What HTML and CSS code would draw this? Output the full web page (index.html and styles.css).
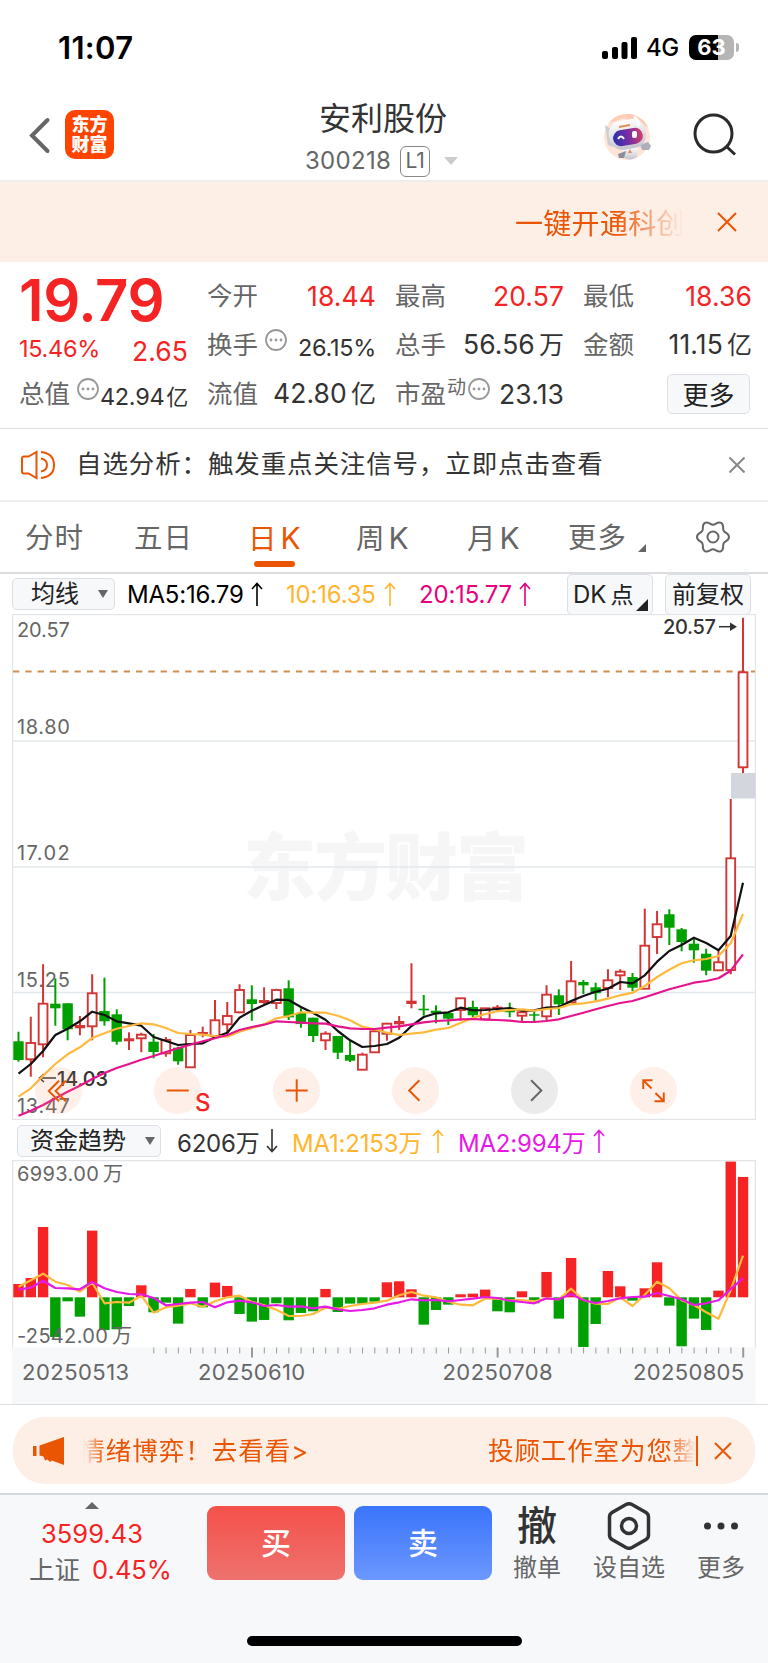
FILE: index.html
```html
<!DOCTYPE html>
<html lang="zh-CN">
<head>
    <meta charset="UTF-8">
    <meta name="viewport" content="width=device-width, initial-scale=1.0">
    <title>安利股份 300218</title>
    <link rel="stylesheet" href="styles.css">
</head>
<body>
    <div class="status-bar">
        <span class="clock">11:07</span>
        <svg class="signal" width="36" height="22" viewBox="0 0 36 22">
            <rect x="0" y="14" width="6" height="8" rx="2"/>
            <rect x="10" y="10" width="6" height="12" rx="2"/>
            <rect x="19.500" y="5" width="6" height="17" rx="2"/>
            <rect x="29" y="0" width="6" height="22" rx="2"/>
        </svg>
        <span class="network">4G</span>
        <span class="battery">63</span>
        <span class="battery-cap"></span>
    </div>

    <header class="title-bar">
        <svg class="back" width="22" height="38" viewBox="0 0 22 38"><path d="M18.500 3 L3 18.500 L18.500 34"/></svg>
        <div class="logo"><span>东方</span><span>财富</span></div>
        <div class="stock">
            <div class="stock-name">安利股份</div>
            <div class="stock-code">300218<span class="level">L1</span><i class="caret"></i></div>
        </div>
        <svg class="robot" width="48" height="48" viewBox="0 0 48 48">
            <defs>
                <linearGradient id="visor" x1="0" x2="1"><stop offset="0" stop-color="#2a2fb0"/><stop offset=".55" stop-color="#7a2fa0"/><stop offset="1" stop-color="#d8406a"/></linearGradient>
                <linearGradient id="shell" x1="0" x2="0" y1="0" y2="1"><stop offset="0" stop-color="#fff"/><stop offset="1" stop-color="#c4c4cc"/></linearGradient>
            </defs>
            <circle cx="23" cy="24" r="23" fill="#ffe4d8"/>
            <path d="M5 10 A23 23 0 0 1 44 14 L36 12 L20 5 Z" fill="#ffcdb6"/>
            <path d="M1 12 L8 17 L9 34 L4 32 Z" fill="#cdcdd4"/>
            <path d="M18 34 H34 L33 44 Q26 49 19 44 Z" fill="url(#shell)"/>
            <path d="M26 36 l2 4 h-4 z" fill="#e48a5c"/>
            <path d="M36 32 L44 29 L47 33 L45 37 L38 37 Z" fill="#aeaeb8"/>
            <path d="M14 41 L22 38 L20 45 L15 45 Z" fill="#8d8d98"/>
            <rect x="5" y="7" width="37" height="29" rx="13" fill="url(#shell)" transform="rotate(-10 23 22)"/>
            <rect x="9" y="16" width="30" height="16" rx="8" fill="url(#visor)" transform="rotate(-10 24 24)"/>
            <path d="M14 26 q3 -5 6 0" fill="none" stroke="#fff" stroke-width="2"/>
            <rect x="28" y="18" width="5" height="7" rx="2" fill="#fff"/>
            <path d="M15 13 L26 11 L26 13 L15 15 Z" fill="#e0914f"/>
            <path d="M30 4 Q36 8 34 13" fill="none" stroke="#fff" stroke-width="3"/>
        </svg>
        <svg class="search" width="46" height="46" viewBox="0 0 46 46"><circle cx="20.500" cy="20.500" r="18.500"/><path d="M33 33 L42 41.500"/></svg>
    </header>

    <div class="banner">
        <span class="banner-text">一键开通科创</span>
        <svg class="banner-close" width="20" height="20" viewBox="0 0 20 20"><path d="M1 1 L19 19 M19 1 L1 19"/></svg>
    </div>

    <section class="quote">
        <div class="price">19.79</div>
        <div class="cell"><label>今开</label><b class="red">18.44</b></div>
        <div class="cell"><label>最高</label><b class="red">20.57</b></div>
        <div class="cell"><label>最低</label><b class="red">18.36</b></div>
        <div class="cell change"><b class="red small">15.46%</b><b class="red">2.65</b></div>
        <div class="cell"><label>换手</label><svg class="more-dot"><use href="#dots"/></svg><b class="small low">26.15%</b></div>
        <div class="cell"><label>总手</label><b>56.56<em>万</em></b></div>
        <div class="cell"><label>金额</label><b>11.15<em>亿</em></b></div>
        <div class="cell"><label>总值</label><svg class="more-dot"><use href="#dots"/></svg><b class="small low">42.94<em>亿</em></b></div>
        <div class="cell"><label>流值</label><b>42.80<em>亿</em></b></div>
        <div class="cell pe"><label>市盈<sup>动</sup></label><svg class="more-dot"><use href="#dots"/></svg><b>23.13</b></div>
        <div class="cell"><button class="more-btn">更多</button></div>
    </section>

    <div class="notice">
        <svg width="36" height="30" viewBox="0 0 36 30"><path d="M16.500 2 V28 L8.500 23.500 H4 Q2 23.500 2 21.500 V8.500 Q2 6.500 4 6.500 H8.500 Z M21 8.500 Q27 9.500 27 15 Q27 20.500 21 21.500 M21 2 Q34 3.500 34 15 Q34 26.500 21 28"/></svg>
        <span>自选分析：触发重点关注信号，立即点击查看</span>
        <svg class="notice-close" width="16" height="16" viewBox="0 0 16 16"><path d="M.5 .5 L15.500 15.500 M15.500 .5 L.5 15.500"/></svg>
    </div>

    <nav class="tabs">
        <a>分时</a>
        <a>五日</a>
        <a class="active">日<i>K</i></a>
        <a>周<i>K</i></a>
        <a>月<i>K</i></a>
        <a class="tab-more">更多</a>
        <svg class="gear" width="34" height="34" viewBox="0 0 34 34">
            <path d="M33 17 C33 20.900 29 20.800 27.650 23.150 C26.300 25.500 28.500 29.150 25.150 31.100 C21.800 33.050 19.700 29.300 17 29.300 C14.300 29.300 12.200 33.050 8.850 31.100 C5.500 29.150 7.700 25.500 6.350 23.150 C5 20.800 1 20.900 1 17 C1 13.100 5 13.200 6.350 10.850 C7.700 8.500 5.500 4.850 8.850 2.900 C12.200 .95 14.300 4.700 17 4.700 C19.700 4.700 21.800 .95 25.150 2.900 C28.500 4.850 26.300 8.500 27.650 10.850 C29 13.200 33 13.100 33 17 Z"/>
            <circle cx="17" cy="17" r="5.500"/>
        </svg>
    </nav>

    <div class="ma-bar">
        <div class="picker">均线<i></i></div>
        <span class="ma ma5">MA5:16.79</span><svg class="arrow black"><use href="#up"/></svg>
        <span class="ma ma10">10:16.35</span><svg class="arrow yellow"><use href="#up"/></svg>
        <span class="ma ma20">20:15.77</span><svg class="arrow pink"><use href="#up"/></svg>
        <div class="chip dk">DK<em>点</em></div>
        <div class="chip">前复权</div>
    </div>

    <div class="chart">
        <svg id="kline" width="744" height="506" viewBox="12 614 744 506"></svg>
        <div class="controls">
            <span><svg viewBox="0 0 48 48"><path d="M24.500 14 L14 24.500 L24.500 35 M31.500 14 L21 24.500 L31.500 35"/></svg></span>
            <span><svg viewBox="0 0 48 48"><path d="M13 24 H35.500"/></svg></span>
            <span><svg viewBox="0 0 48 48"><path d="M13 24 H35.500 M24.200 12.500 V35.500"/></svg></span>
            <span><svg viewBox="0 0 48 48"><path d="M28 13.500 L17.500 24 L28 34.500"/></svg></span>
            <span class="grey"><svg viewBox="0 0 48 48"><path d="M20.500 13.500 L31 24 L20.500 34.500"/></svg></span>
            <span><svg viewBox="0 0 48 48"><path d="M13.500 22.500 V13.500 H23 M13.500 13.500 L22 22 M34.500 26 V35 H25 M34.500 35 L26 26.500"/></svg></span>
        </div>
    </div>

    <div class="fund-bar">
        <div class="picker wide">资金趋势<i></i></div>
        <span class="ma f0">6206万</span><svg class="arrow dark"><use href="#down"/></svg>
        <span class="ma f1">MA1:2153万</span><svg class="arrow yellow"><use href="#up"/></svg>
        <span class="ma f2">MA2:994万</span><svg class="arrow purple"><use href="#up"/></svg>
    </div>
    <div class="fund">
        <svg id="fund" width="744" height="244" viewBox="12 1160 744 244"></svg>
    </div>

    <div class="promo-wrap">
        <div class="promo">
            <svg width="32" height="28" viewBox="0 0 32 28"><path d="M0 9 H3.500 V19 H0 Z M6.500 8.500 L31 0 V28 L19 23.500 L17 25 L14.500 22.500 L12 23.500 L10.500 19.500 L6.500 18.500 Z"/></svg>
            <span class="promo-left">情绪博弈！去看看&gt;</span>
            <span class="promo-right">投顾工作室为您整</span>
            <i class="bar"></i>
            <svg class="promo-close" width="18" height="18" viewBox="0 0 18 18"><path d="M1 1 L17 17 M17 1 L1 17"/></svg>
        </div>
    </div>

    <footer class="bottom">
        <div class="index">
            <i></i>
            <div class="index-value">3599.43</div>
            <div class="index-row">上证<b>0.45%</b></div>
        </div>
        <button class="buy">买</button>
        <button class="sell">卖</button>
        <div class="action cancel"><strong>撤</strong><span>撤单</span></div>
        <div class="action fav">
            <svg width="46" height="48" viewBox="0 0 46 48"><path d="M20 2.500 Q23 1 26 2.500 L40 10.500 Q42.500 12 42.500 15 V33 Q42.500 36 40 37.500 L26 45.500 Q23 47 20 45.500 L6 37.500 Q3.500 36 3.500 33 V15 Q3.500 12 6 10.500 Z"/><circle cx="23" cy="24" r="7.500"/></svg>
            <span>设自选</span>
        </div>
        <div class="action other">
            <svg width="36" height="48" viewBox="0 0 36 48"><circle cx="4.500" cy="24" r="3.500"/><circle cx="18" cy="24" r="3.500"/><circle cx="31.500" cy="24" r="3.500"/></svg>
            <span>更多</span>
        </div>
    </footer>
    <div class="home"><i></i></div>

    <svg class="defs" width="0" height="0">
        <symbol id="dots" viewBox="0 0 22 22"><circle cx="11" cy="11" r="10" fill="none" stroke="#999" stroke-width="1.800"/><circle cx="6" cy="11" r="1.400" fill="#999"/><circle cx="11" cy="11" r="1.400" fill="#999"/><circle cx="16" cy="11" r="1.400" fill="#999"/></symbol>
        <symbol id="up" viewBox="0 0 12 24"><path d="M6 24 V1.500 M1 7 L6 1.500 L11 7" fill="none" stroke="currentColor" stroke-width="1.600"/></symbol>
        <symbol id="down" viewBox="0 0 12 24"><path d="M6 0 V22.500 M1 17 L6 22.500 L11 17" fill="none" stroke="currentColor" stroke-width="1.600"/></symbol>
    </svg>

    <script src="chart.js"></script>
</body>
</html>
```
FILE: styles.css
```css
* {
    box-sizing: border-box;
}
body {
    margin: 0;
    width: 768px;
    height: 1663px;
    overflow: hidden;
    background: #fff;
    color: #333;
    font-family: Inter, "Noto Sans CJK SC", sans-serif;
    font-weight: 400;
}
i, em {
    font-style: normal;
}
svg {
    display: block;
    flex: none;
}
.defs {
    display: none;
}
.status-bar {
    display: flex;
    align-items: center;
    height: 95px;
    padding-left: 58px;
    color: #000;
}
.clock {
    width: 544px;
    font-size: 31px;
    font-weight: 600;
    letter-spacing: 0.3px;
}
.network {
    width: 43px;
    margin-left: 8px;
    font-size: 24px;
    font-weight: 500;
    letter-spacing: -0.5px;
    white-space: nowrap;
}
.battery {
    width: 45px;
    height: 25px;
    border-radius: 7px;
    background: linear-gradient(90deg, #000 64%, #b5b5b5 64%);
    color: #fff;
    font-size: 22px;
    font-weight: 700;
    line-height: 25px;
    text-align: center;
}
.battery-cap {
    width: 3px;
    height: 9px;
    margin-left: 2px;
    border-radius: 0 4px 4px 0;
    background: #b5b5b5;
}

/* title */
.title-bar {
    display: flex;
    height: 87px;
    padding-left: 29px;
    border-bottom: 2px solid #eee;
}
.back {
    margin-top: 22px;
    fill: none;
    stroke: #666;
    stroke-width: 4;
    stroke-linecap: round;
}
.logo {
    display: flex;
    flex-direction: column;
    justify-content: center;
    width: 49px;
    height: 49px;
    margin: 15px 0 0 14px;
    border-radius: 10px;
    background: #ff4400;
    color: #fff;
    font-size: 18px;
    font-weight: 900;
    line-height: 20px;
    text-align: center;
}
.stock {
    width: 300px;
    margin-left: 119px;
    text-align: center;
}
.stock-name {
    height: 48px;
    font-size: 32px;
    line-height: 48px;
}
.stock-code {
    display: flex;
    align-items: center;
    padding-left: 72px;
    height: 36px;
    color: #666;
    font-size: 24px;
    letter-spacing: 0.3px;
    line-height: 34px;
}
.level {
    width: 30px;
    height: 31px;
    margin-left: 9px;
    border: 1.5px solid #888;
    border-radius: 6px;
    font-size: 21px;
    letter-spacing: 0;
    line-height: 28px;
}
.caret {
    margin-left: 14px;
    border: 7px solid transparent;
    border-top: 8px solid #ccc;
    border-bottom: 0;
}
.robot {
    margin: 18px 0 0 71px;
}
.search {
    margin: 18px 0 0 41px;
    fill: none;
    stroke: #2a2a2a;
    stroke-width: 3;
}

.banner {
    display: flex;
    align-items: center;
    height: 80px;
    padding-left: 515px;
    background: #fdeee6;
    color: #ea5504;
}
.banner-text {
    width: 172px;
    height: 40px;
    overflow: hidden;
    font-size: 28px;
    line-height: 44px;
    letter-spacing: 0.3px;
    white-space: nowrap;
    -webkit-mask-image: linear-gradient(90deg, #000 58%, transparent 98%);
    mask-image: linear-gradient(90deg, #000 58%, transparent 98%);
}
.banner-close {
    margin-left: 30px;
    fill: none;
    stroke: #ea5504;
    stroke-width: 2;
}

/* quote */
.quote {
    display: grid;
    grid-template-columns: repeat(4, 168px);
    grid-auto-rows: 49px;
    column-gap: 20px;
    height: 167px;
    padding: 9px 16px 0 20px;
    border-bottom: 1px solid #ddd;
}
.price {
    margin-left: -1px;
    color: #f52323;
    font-size: 58px;
    font-weight: 600;
    line-height: 58px;
    letter-spacing: -0.4px;
}
.cell {
    display: flex;
    align-items: center;
    white-space: nowrap;
}
.cell label {
    margin-left: -1px;
    color: #666;
    font-size: 25.5px;
    line-height: 48px;
}
.cell sup {
    position: relative;
    top: -9px;
    margin-left: 1px;
    font-size: 19px;
    line-height: 0;
    vertical-align: baseline;
}
.cell b {
    margin-left: auto;
    font-size: 26.5px;
    font-weight: 400;
    line-height: 48px;
    letter-spacing: 0.1px;
}
.cell em {
    margin-left: 4px;
    font-size: 25px;
}
.cell .small {
    font-size: 23.5px;
    letter-spacing: -0.3px;
}
.cell .small em {
    margin-left: 2px;
    font-size: 22px;
}
.cell .low {
    padding-top: 6px;
}
.cell .red {
    color: #f52323;
}
.change {
    padding-top: 12px;
}
.change b:first-child {
    margin-left: -1px;
    margin-top: -4px;
}
.more-dot {
    width: 22px;
    height: 22px;
    margin: -10px 0 0 7px;
}
.pe .more-dot {
    margin-left: 2px;
}
.more-btn {
    width: 83px;
    height: 40px;
    margin-left: auto;
    margin-right: 2px;
    border: 1.5px solid #dcdfe6;
    border-radius: 5px;
    background: #f7f8fa;
    color: #222;
    font: 26px/34px "Noto Sans CJK SC", sans-serif;
    padding: 0;
}

.notice {
    display: flex;
    align-items: center;
    height: 73px;
    padding-left: 20px;
    border-bottom: 2px solid #eee;
    font-size: 25.5px;
    line-height: 40px;
}
.notice svg {
    fill: none;
    stroke: #ea5504;
    stroke-width: 2;
}
.notice span {
    width: 653px;
    margin: -2px 0 0 20px;
    letter-spacing: 0.88px;
    white-space: nowrap;
}
.notice .notice-close {
    stroke: #888;
}

.tabs {
    display: flex;
    height: 72px;
    border-bottom: 2px solid #dcdde1;
    padding-left: 25px;
    color: #666;
    font-size: 28.5px;
    line-height: 72px;
    white-space: nowrap;
}
.tabs a {
    width: 109px;
    letter-spacing: 1px;
}
.tabs a i {
    margin-left: 3px;
    font-size: 30px;
}
.tabs a:nth-child(2) { width: 114px; }
.tabs a:nth-child(3) { width: 108px; }
.tabs a:nth-child(4) { width: 111px; }
.tabs a:nth-child(5) { width: 101px; }
.tabs .active {
    position: relative;
    color: #ea5504;
}
.active::after {
    content: "";
    position: absolute;
    left: 6px;
    bottom: 5px;
    width: 41px;
    height: 6px;
    border-radius: 3px;
    background: #ea5504;
}
.tabs .tab-more {
    position: relative;
    width: 128px;
}
.tab-more::after {
    content: "";
    position: absolute;
    left: 70px;
    top: 42px;
    border-left: 8px solid transparent;
    border-bottom: 8px solid #666;
}
.gear {
    margin-top: 18px;
    fill: none;
    stroke: #666;
    stroke-width: 2;
}

/* indicator rows */
.ma-bar, .fund-bar {
    display: flex;
    align-items: center;
    height: 40px;
    padding-left: 12px;
    white-space: nowrap;
}
.picker {
    display: flex;
    align-items: center;
    width: 103px;
    height: 32px;
    padding-left: 18px;
    border: 1.5px solid #dcdfe6;
    border-radius: 5px;
    background: #f7f8fa;
    color: #222;
    font-size: 24px;
    line-height: 30px;
}
.picker i {
    margin-left: 19px;
    border: 5px solid transparent;
    border-top: 8px solid #666;
    border-bottom: 0;
}
.ma {
    font-size: 24px;
    letter-spacing: -0.2px;
}
.ma5 {
    width: 124px;
    margin-left: 12px;
    color: #000;
}
.ma10 {
    width: 98px;
    margin-left: 23px;
    color: #ffb62e;
}
.ma20 {
    width: 100px;
    margin-left: 23px;
    color: #e6007e;
}
.arrow {
    width: 12px;
    height: 24px;
}
.black { color: #000; }
.dark { color: #333; }
.yellow { color: #ffb62e; }
.pink { color: #e6007e; }
.purple { color: #e619e6; }
.chip {
    width: 86px;
    height: 41px;
    border: 1.5px solid #dcdfe6;
    border-radius: 5px;
    background: #f7f8fa;
    color: #222;
    font-size: 24px;
    line-height: 39px;
    text-align: center;
}
.chip.dk {
    position: relative;
    margin: 0 12px 0 36px;
    padding-left: 5px;
    text-align: left;
}
.dk em {
    margin-left: 4px;
    font-size: 23px;
}
.dk::after {
    content: "";
    position: absolute;
    right: 4px;
    bottom: 3px;
    border-left: 12px solid transparent;
    border-bottom: 12px solid #222;
}
.chart {
    position: relative;
    padding-left: 12px;
}
.controls {
    position: absolute;
    left: 35px;
    top: 453px;
    display: flex;
    gap: 72.1px;
}
.controls span {
    width: 47px;
    height: 47px;
    border-radius: 50%;
    background: rgba(248, 150, 100, 0.14);
}
.controls svg {
    fill: none;
    stroke: #ea5504;
    stroke-width: 2;
}
.controls .grey {
    background: #ebebeb;
}
.controls .grey svg {
    stroke: #666;
}
.fund-bar {
    padding: 2px 0 0 17px;
}
.picker.wide {
    width: 144px;
    padding-left: 12px;
}
.f0 {
    width: 89px;
    margin-left: 16px;
}
.f1 {
    width: 140px;
    margin-left: 14px;
    color: #ffb62e;
}
.f2 {
    width: 135px;
    margin-left: 14px;
    color: #e619e6;
}
.fund {
    padding-left: 12px;
    border-bottom: 1px solid #ddd;
}
.axis {
    fill: #666;
    font-size: 20px;
    letter-spacing: 0.2px;
}
.date {
    fill: #666;
    font-size: 22px;
    letter-spacing: -0.2px;
}
.mark {
    fill: #333;
    font-size: 20px;
    font-weight: 500;
}
.watermark {
    fill: #f6f6f6;
    font-size: 73px;
    font-weight: 900;
}

.promo-wrap {
    height: 88px;
    padding: 12px 13px 0;
}
.promo {
    display: flex;
    align-items: center;
    height: 67px;
    padding-left: 20px;
    border-radius: 32px;
    background: #fdeee6;
    color: #ea5504;
    font-size: 25.5px;
    line-height: 36px;
    white-space: nowrap;
}
.promo svg {
    fill: #ea5504;
}
.promo-left {
    display: flex;
    justify-content: flex-end;
    width: 226px;
    margin-left: 18px;
    overflow: hidden;
    letter-spacing: 1px;
    -webkit-mask-image: linear-gradient(90deg, transparent 0, #000 10%);
    mask-image: linear-gradient(90deg, transparent 0, #000 10%);
}
.promo-right {
    width: 208px;
    margin-left: 179px;
    overflow: hidden;
    letter-spacing: 0.9px;
    -webkit-mask-image: linear-gradient(90deg, #000 86%, transparent 100%);
    mask-image: linear-gradient(90deg, #000 86%, transparent 100%);
}
.bar {
    width: 2px;
    height: 30px;
    background: #ea5504;
}
.promo .promo-close {
    margin-left: 16px;
    fill: none;
    stroke: #ea5504;
    stroke-width: 2;
}

/* trade bar */
.bottom {
    display: flex;
    height: 116px;
    border-top: 2px solid #d4d6de;
    background: #f7f8fa;
}
.index {
    width: 184px;
    padding-top: 7px;
    text-align: center;
}
.index > i {
    display: block;
    width: 0;
    margin: 0 auto;
    border: 7px solid transparent;
    border-top: 0;
    border-bottom: 7px solid #666;
}
.index-value {
    margin-top: 8px;
    color: #f52323;
    font-size: 25.5px;
    line-height: 34px;
}
.index-row {
    padding-left: 17px;
    color: #666;
    font-size: 25.5px;
    line-height: 37px;
    white-space: nowrap;
}
.index-row b {
    margin-left: 12px;
    color: #f52323;
    font-weight: 400;
}
.buy, .sell {
    width: 138px;
    height: 74px;
    margin: 11px 0 0 23px;
    padding: 0 0 4px;
    border: 0;
    border-radius: 9px;
    background: linear-gradient(#f5504a, #ee726e);
    color: #fff;
    font: 500 30px "Noto Sans CJK SC", sans-serif;
}
.sell {
    margin-left: 9px;
    background: linear-gradient(#3a74fa, #6c98ff);
}
.action {
    display: flex;
    flex-direction: column;
    align-items: center;
    width: 80px;
    padding-top: 7px;
    color: #666;
    font-size: 24px;
}
.action strong {
    height: 48px;
    color: #333;
    font-size: 40px;
    font-weight: 500;
    line-height: 47px;
}
.action span {
    line-height: 36px;
}
.action svg {
    fill: none;
    stroke: #333;
    stroke-width: 3.5;
}
.cancel {
    margin-left: 5px;
}
.fav {
    margin-left: 12px;
}
.other {
    margin-left: 12px;
}
.other svg {
    fill: #333;
    stroke: none;
}
.home {
    height: 54px;
    padding-top: 27px;
    background: #f7f8fa;
}
.home i {
    display: block;
    width: 275px;
    height: 10px;
    margin: 0 auto;
    border-radius: 5px;
    background: #000;
}
```
FILE: chart.js
```js
const RED = "#d33535";
const GREEN = "#00a000";
const STEP = 12.28;
const x = i => 18.5 + i * STEP;

// direction, high, body top, body bottom, low
const candles = [
    ["g", 1031.7, 1041.3, 1060, 1061.7], ["r", 1016.7, 1043, 1059.3, 1076.7], ["r", 964.3, 1003.7, 1044.3, 1057.3],
    ["g", 978.3, 1003.7, 1008.3, 1025.7], ["g", 1003.3, 1003.3, 1029.3, 1040.3], ["r", 1016, 1025, 1028.3, 1035.3],
    ["r", 974.3, 993.3, 1026.3, 1040.3], ["g", 977.7, 1011, 1021.3, 1025.7], ["g", 1009.3, 1014.3, 1041.7, 1044.7],
    ["r", 1032.3, 1038.3, 1041.3, 1050], ["r", 1032.7, 1034.7, 1038.3, 1052.3], ["g", 1034, 1041.7, 1052, 1058.3],
    ["r", 1037, 1040, 1053.3, 1056.7], ["g", 1046.7, 1047.7, 1061.3, 1064.7], ["r", 1030, 1035, 1067.3, 1067.3],
    ["r", 1026.7, 1032, 1034, 1037.3], ["r", 1000, 1020.3, 1036, 1036], ["r", 1002, 1016, 1024.3, 1033.3],
    ["r", 984.3, 990, 1012.3, 1013.3], ["g", 985.3, 999.3, 1004, 1020.7], ["r", 987.3, 1000, 1003, 1004],
    ["r", 988.7, 990, 1003, 1009], ["g", 980.3, 988.3, 1017.3, 1020], ["g", 1008.3, 1013, 1024, 1027.7],
    ["g", 1017.7, 1017.7, 1036, 1042], ["r", 1031.3, 1033.7, 1040.3, 1050], ["g", 1036, 1036, 1052.7, 1059],
    ["g", 1040, 1055, 1060.7, 1062], ["r", 1052.7, 1054.7, 1069.7, 1069.7], ["r", 1030, 1031.3, 1052.3, 1052.3],
    ["r", 1022.7, 1023.7, 1033.7, 1040.7], ["r", 1016, 1021, 1024.3, 1030], ["r", 963.3, 1000.7, 1004, 1008.3],
    ["g", 995, 1008.7, 1010.3, 1015.7], ["g", 1005.3, 1010.7, 1013, 1023.3], ["g", 1012.3, 1013, 1018.7, 1025],
    ["r", 997.7, 998.3, 1010, 1020.7], ["g", 1000.7, 1007, 1015.3, 1017.7], ["r", 1008, 1008.3, 1019.3, 1019.3],
    ["r", 1005, 1006.7, 1009, 1011.7], ["g", 1002.7, 1010, 1012.3, 1017.3], ["r", 1011.7, 1012.3, 1015.7, 1021.7],
    ["g", 1011.7, 1014.3, 1015.7, 1021.7], ["r", 985.3, 994.7, 1016.3, 1020.7], ["g", 989.3, 995.3, 1004.3, 1015],
    ["r", 961, 981.3, 1002.3, 1002.3], ["g", 980, 982, 985.3, 994], ["g", 982.7, 987.3, 993.3, 1000.7],
    ["r", 969.3, 980.3, 988, 997.3], ["r", 969.3, 971.7, 975.3, 990], ["g", 973, 977, 987.7, 991],
    ["r", 908.7, 945.7, 988.7, 988.7], ["r", 911, 924.3, 937, 954], ["g", 909.3, 914.3, 927.7, 945],
    ["g", 928, 929.3, 942, 951.3], ["g", 938.3, 943.7, 950.3, 962.7], ["g", 948.7, 953.7, 970.7, 975.3],
    ["r", 950.7, 962.3, 970.3, 970.3], ["r", 799, 858.3, 970, 974.3], ["r", 617.7, 672.3, 767.3, 773]
];

const ma5 = [1073.7, 1064, 1051, 1035, 1028.7, 1021.3, 1011.7, 1015, 1021.3, 1023.3, 1025.7, 1037, 1041, 1045, 1044, 1043.3, 1037.3, 1032.7, 1017.7, 1010.7,
    1005, 999.7, 1000, 1007, 1013, 1019.7, 1031, 1040.3, 1047, 1046, 1044, 1037.7, 1026, 1017, 1013.3, 1012.3, 1007.7, 1010.3, 1010, 1009,
    1008, 1010.7, 1010.3, 1007.7, 1007, 1001, 996, 991.7, 988.7, 982, 983.3, 975.3, 961.7, 951, 945, 937.7, 943, 950.3, 936, 882.7];
const ma10 = [1096.7, 1088.3, 1075.7, 1064, 1054.3, 1047.3, 1038, 1033.3, 1028.7, 1026, 1023.3, 1024.3, 1028, 1033, 1034, 1034.7, 1036, 1036.7, 1031.7, 1028.3,
    1024.3, 1018.3, 1016, 1012.3, 1012.7, 1012.7, 1015.7, 1020.3, 1026.7, 1029.3, 1032.7, 1035, 1033.7, 1032.3, 1029.7, 1028, 1023, 1018, 1014, 1011.3,
    1010, 1009.3, 1010.7, 1009, 1008, 1004.3, 1003.3, 1001.3, 998.7, 995.3, 992.7, 986, 977, 969.7, 963.3, 960.3, 959, 956, 943.3, 914];
const ma20 = [1115.7, 1110.7, 1105, 1098.3, 1091.7, 1085.7, 1079, 1073, 1068, 1064, 1059.7, 1056, 1052, 1048.3, 1044.7, 1041.3, 1038.3, 1035, 1030, 1027,
    1024.7, 1021.3, 1022, 1022.7, 1023.3, 1023.7, 1026.3, 1028.3, 1029, 1029, 1027.7, 1026.3, 1024.3, 1022.3, 1021, 1020.3, 1019.3, 1019, 1019.7, 1020,
    1020.7, 1022, 1022, 1021, 1019.3, 1016, 1012.7, 1009.3, 1006, 1003, 1001, 997.3, 993.3, 989.3, 986, 982.7, 981, 978.3, 970.7, 954.3];

// fund flow, in thirds of a pixel from the zero line
const flow = [40, 58, 211, -119, -12, -58, 200, -98, -96, -26, 36, -45, -16, -79, 25, -30, 44, 34, -50, -73,
    -68, -18, -69, -47, -42, 25, -44, -19, -19, -13, 45, 48, 24, -82, -38, -22, 9, 11, 23, -42,
    -45, 18, -18, 76, -64, 118, -149, -80, 79, 33, -10, 27, 105, -25, -147, -64, -98, 20, 407, 361];
const fundMa1 = [500, 481, 461, 485, 495, 515, 488, 550, 546, 548, 527, 578, 562, 557, 550, 560, 544, 532, 527, 545,
    556, 569, 588, 588, 582, 563, 566, 558, 552, 548, 542, 526, 516, 527, 532, 545, 554, 556, 536, 536,
    541, 540, 544, 536, 538, 506, 540, 551, 552, 532, 558, 524, 485, 505, 541, 555, 577, 596, 510, 407];
const fundMa2 = [509, 503, 482, 504, 505, 508, 486, 505, 516, 522, 523, 534, 556, 552, 548, 546, 562, 547, 542, 547,
    558, 555, 560, 559, 565, 560, 568, 573, 570, 565, 554, 547, 538, 541, 540, 544, 540, 536, 531, 534,
    542, 546, 550, 535, 538, 522, 541, 549, 543, 535, 531, 530, 519, 528, 538, 555, 550, 541, 507, 475];

function line(points, color) {
    const d = points.map((y, i) => `${x(i).toFixed(1)},${y.toFixed(1)}`).join(" ");
    return `<polyline points="${d}" fill="none" stroke="${color}" stroke-width="2.2" stroke-linejoin="round"/>`;
}

function text(cls, tx, ty, str, extra = "") {
    return `<text class="${cls}" x="${tx}" y="${ty}" ${extra}>${str}</text>`;
}

function drawKline() {
    let s = text("watermark", 243, 894, "东方财富", 'textLength="286"');
    [741, 867, 992.5].forEach(y => s += `<path d="M12 ${y} H756" stroke="#e3e7ee" stroke-width="1.5"/>`);
    s += `<rect x="12.5" y="614.5" width="743" height="505" fill="none" stroke="#e3e4e8" stroke-width="1.3"/>`;
    [[636.5, "20.57"], [734, "18.80"], [860, "17.02"], [987, "15.25"], [1113, "13.47"]].forEach(([y, label]) => {
        s += text("axis", 17, y, label, 'textLength="53"');
    });
    s += `<path d="M13 671.5 H755" stroke="#cc8f52" stroke-width="2" stroke-dasharray="6.3 6"/>`;
    s += `<rect x="731" y="773" width="24.5" height="25.5" fill="#d3d6dc"/>`;

    candles.forEach(([type, high, top, bottom, low], i) => {
        const color = type === "r" ? RED : GREEN;
        const cx = x(i);
        if (type === "r" && bottom - top > 3.4) {
            s += `<path d="M${cx} ${high} V${top} M${cx} ${bottom} V${low}" stroke="${color}" stroke-width="2"/>`;
            s += `<rect x="${cx - 4.4}" y="${top}" width="8.8" height="${bottom - top}" fill="#fff" stroke="${color}" stroke-width="1.9"/>`;
        } else {
            s += `<path d="M${cx} ${high} V${low}" stroke="${color}" stroke-width="2"/>`;
            s += `<rect x="${cx - 5.2}" y="${top}" width="10.4" height="${bottom - top}" fill="${color}"/>`;
        }
    });

    s += text("mark", 663, 634, "20.57", 'textLength="53"');
    s += `<path d="M719 626.7 H733" stroke="#333" stroke-width="1.5"/><path d="M730 622.5 L737 626.7 L730 631 Z" fill="#333"/>`;
    s += text("mark", 57, 1086, "14.03", 'textLength="51"');
    s += `<path d="M56 1078 H40 M44 1074 L39.5 1078 L44 1082" fill="none" stroke="#333" stroke-width="1.5"/>`;
    s += line(ma5, "#111") + line(ma10, "#ffb93c") + line(ma20, "#e6148c");
    s += text("s-mark", 195, 1110.5, "S", 'fill="#f52323" font-size="24" font-weight="500"');
    document.getElementById("kline").innerHTML = s;
}

function drawFund() {
    const zero = 1297.3;
    let s = `<rect x="12" y="1347.5" width="743.5" height="57" fill="#f7f8fa"/>`;
    s += `<path d="M12.5 1347.5 V1160.5 H755.5 V1347.5" fill="none" stroke="#e3e4e8" stroke-width="1.5"/>`;
    flow.forEach((v, i) => {
        const h = Math.abs(v) / 3;
        s += `<rect x="${x(i) - 5.2}" y="${v > 0 ? zero - h : zero}" width="10.4" height="${h}" fill="${v > 0 ? "#f52323" : GREEN}"/>`;
    });
    s += line(fundMa1.map(v => 1120 + v / 3), "#ffb93c") + line(fundMa2.map(v => 1120 + v / 3), "#e619e6");
    s += text("axis", 17, 1181, "6993.00", 'textLength="82"') + text("axis", 103, 1181, "万", 'textLength="19"');
    s += text("axis", 17, 1343, "-2542.00", 'textLength="91"') + text("axis", 112, 1343, "万", 'textLength="19"');
    for (let i = 11; i < 60; i++) {
        const big = (i + 1) % 20 === 0;
        s += `<path d="M${x(i) + .2} 1347.5 V${big ? 1357.5 : 1353.5}" stroke="#999" stroke-width="${big ? 2 : 1}"/>`;
    }
    s += text("date", 22, 1379.5, "20250513", 'textLength="107"') + text("date", 198, 1379.5, "20250610", 'textLength="107"');
    s += text("date", 442.5, 1379.5, "20250708", 'textLength="110"') + text("date", 633, 1379.5, "20250805", 'textLength="111"');
    document.getElementById("fund").innerHTML = s;
}

drawKline();
drawFund();
```
